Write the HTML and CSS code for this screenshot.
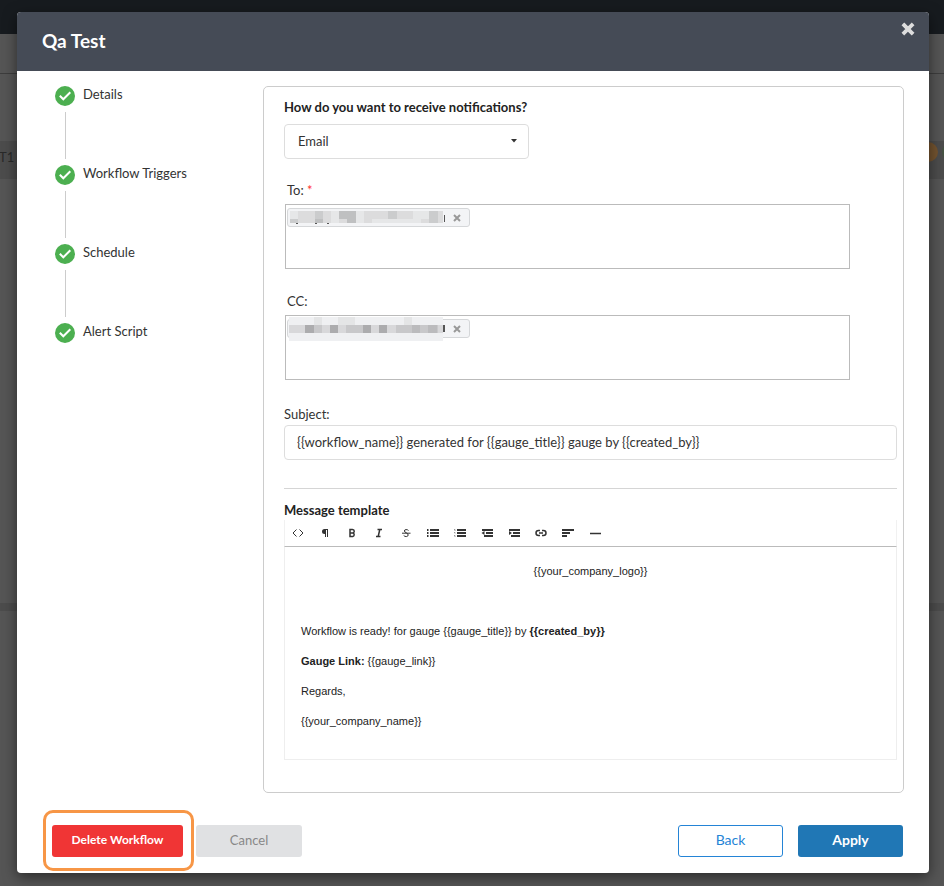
FILE: index.html
```html
<!DOCTYPE html>
<html lang="en">
<head>
<meta charset="utf-8">
<meta name="viewport" content="width=device-width, initial-scale=1">
<title>Qa Test</title>
<link rel="stylesheet" href="styles.css">
</head>
<body>
<div class="page">
  <div class="page-nav"></div>
  <div class="page-bar"></div>
  <div class="page-gap"></div>
  <div class="page-row"><span class="page-name">ST1</span><span class="page-dots"><i class="dot dot-orange"></i><i class="dot dot-green"></i></span></div>
  <div class="page-list"></div>
  <div class="page-strip"></div>
</div>
<div class="overlay">
  <section class="modal" role="dialog" aria-labelledby="title">
    <header class="modal-header">
      <h1 id="title">Qa Test</h1>
      <button class="close" type="button" aria-label="Close"><svg width="14" height="14" viewBox="0 0 14 14"><path d="M3.200 3.200L10.800 10.800M10.800 3.200L3.200 10.800" stroke="currentColor" stroke-width="3.800" stroke-linecap="square"/></svg></button>
    </header>
    <div class="modal-body">
      <ol class="steps">
        <li class="step"><svg class="check" viewBox="0 0 20 20"><circle cx="10" cy="10" r="10"/><path d="M4.800 9.800L8.300 13.300L15.300 6.300"/></svg><span>Details</span></li>
        <li class="step"><svg class="check" viewBox="0 0 20 20"><circle cx="10" cy="10" r="10"/><path d="M4.800 9.800L8.300 13.300L15.300 6.300"/></svg><span>Workflow Triggers</span></li>
        <li class="step"><svg class="check" viewBox="0 0 20 20"><circle cx="10" cy="10" r="10"/><path d="M4.800 9.800L8.300 13.300L15.300 6.300"/></svg><span>Schedule</span></li>
        <li class="step"><svg class="check" viewBox="0 0 20 20"><circle cx="10" cy="10" r="10"/><path d="M4.800 9.800L8.300 13.300L15.300 6.300"/></svg><span>Alert Script</span></li>
      </ol>
      <form class="panel">
        <label class="heading" for="channel">How do you want to receive notifications?</label>
        <div class="select-wrap">
          <select id="channel"><option>Email</option></select>
          <svg class="caret" width="8" height="4" viewBox="0 0 8 4"><path d="M1 0H7L4 3.500Z" fill="#333"/></svg>
        </div>
        <div class="recipients">
          <span class="label" id="to-label">To: <span class="required">*</span></span>
          <div class="tag-box" role="group" aria-labelledby="to-label">
            <span class="tag">
              <svg class="mosaic" width="160" height="24" viewBox="0 0 160 24" shape-rendering="crispEdges">
                <path d="M8 17h2v1h-2zM27 17h2v1h-2zM39 17h2v1h-2zM156 9h1v7h-1z" fill="#555"/>
                <g transform="translate(2 5) scale(8.200 4)">
                  <path d="M0 0h18.700v3h-18.700z" fill="#dcdcdd"/>
                  <path d="M0 0h1v2h-1zM5 0h1v3h-1zM8 0h1v3h-1zM15 0h2v2h-2zM10 2h6v1h-6z" fill="#e6e7e8"/>
                  <path d="M3 0h1v2h-1zM12 0h1v2h-1zM17 0h1v3h-1zM0 2h1v1h-1z" fill="#cbcccd"/>
                  <path d="M6 0h1v2h-1zM7 0h1v3h-1zM3 2h1v1h-1z" fill="#bfc0c1"/>
                </g>
              </svg>
              <button type="button" class="remove" aria-label="Remove"><svg width="8" height="8" viewBox="0 0 8 8"><path d="M1 1L7 7M7 1L1 7" stroke="#999" stroke-width="2"/></svg></button>
            </span>
          </div>
        </div>
        <div class="recipients">
          <span class="label" id="cc-label">CC:</span>
          <div class="tag-box" role="group" aria-labelledby="cc-label">
            <span class="tag">
              <svg class="mosaic" width="160" height="24" viewBox="0 0 160 24" shape-rendering="crispEdges">
                <path d="M155 8h2v7h-2z" fill="#555"/>
                <g transform="translate(1 0) scale(8.200 8)">
                  <path d="M0 0h18.800v3h-18.800z" fill="#eff0f2"/>
                  <path d="M3 0h1v1h-1zM6 0h2v1h-2zM14 0h1v1h-1z" fill="#e4e5e6"/>
                  <path d="M0 1h18.800v1h-18.800z" fill="#c8c8ca"/>
                  <path d="M0 1h2v1h-2zM4 1h1v1h-1zM6 1h1v1h-1zM10 1h1v1h-1zM12 1h1v1h-1zM18.200 1h.6v1h-.6z" fill="#d8d8da"/>
                  <path d="M2 1h1v1h-1zM5 1h1v1h-1zM9 1h1v1h-1zM11 1h1v1h-1z" fill="#acacae"/>
                  <path d="M15 1h1v1h-1zM17 1h1v1h-1z" fill="#bbbbbd"/>
                </g>
              </svg>
              <button type="button" class="remove" aria-label="Remove"><svg width="8" height="8" viewBox="0 0 8 8"><path d="M1 1L7 7M7 1L1 7" stroke="#999" stroke-width="2"/></svg></button>
            </span>
          </div>
        </div>
        <label class="label subject-label" for="subject">Subject:</label>
        <input id="subject" class="subject" type="text" value="{{workflow_name}} generated for {{gauge_title}} gauge by {{created_by}}">
        <hr>
        <h2 class="heading">Message template</h2>
        <div class="toolbar" role="toolbar" aria-label="Formatting">
          <button type="button" aria-label="HTML"><svg viewBox="0 0 14 14"><path d="M5.500 3.500L2 7L5.500 10.500M8.500 3.500L12 7L8.500 10.500" class="thin"/></svg></button>
          <button type="button" aria-label="Paragraph"><svg viewBox="0 0 14 14"><path d="M10 3H6.500A2.500 2.500 0 0 0 6.500 8H7V11H8V4H9V11H10Z" class="fill"/></svg></button>
          <button type="button" aria-label="Bold"><svg viewBox="0 0 14 14"><path d="M5 3.500H7.500A1.700 1.700 0 0 1 7.500 7H5ZM5 7H7.800A1.800 1.800 0 0 1 7.800 10.500H5Z" class="medium"/></svg></button>
          <button type="button" aria-label="Italic"><svg viewBox="0 0 14 14"><path d="M5.500 3.500H10M4 10.500H8.500M7.800 3.500L6.200 10.500" class="medium"/></svg></button>
          <button type="button" aria-label="Strikethrough"><svg viewBox="0 0 14 14"><path d="M9.500 4.500C8.500 3.200 5.300 3.200 5.300 5C5.300 6.500 9.200 6.800 9.200 9C9.200 11 5.800 11 4.700 9.500M3 7.200H11.500" class="thin"/></svg></button>
          <button type="button" aria-label="Bulleted list"><svg viewBox="0 0 14 14"><path d="M1 4H2.500M1 7H2.500M1 10H2.500M4 4H13M4 7H13M4 10H13" class="bar"/></svg></button>
          <button type="button" aria-label="Numbered list"><svg viewBox="0 0 14 14"><path d="M4 4H13M4 7H13M4 10H13" class="bar"/><path d="M1 3.500H2V5M1 6.500H2V7.500M1 9.500H2V11" class="faint"/></svg></button>
          <button type="button" aria-label="Outdent"><svg viewBox="0 0 14 14"><path d="M2 4H13M6 7H13M4 10H13" class="bar"/><path d="M1.500 7L4.500 5V9Z" class="fill"/></svg></button>
          <button type="button" aria-label="Indent"><svg viewBox="0 0 14 14"><path d="M2 4H13M6 7H13M4 10H13" class="bar"/><path d="M2 5L5 7L2 9Z" class="fill"/></svg></button>
          <button type="button" aria-label="Link"><svg viewBox="0 0 14 14"><path d="M6 9.500H4.500A2.500 2.500 0 0 1 4.500 4.500H6M8 4.500H9.500A2.500 2.500 0 0 1 9.500 9.500H8M5 7H9" class="medium"/></svg></button>
          <button type="button" aria-label="Align"><svg viewBox="0 0 14 14"><path d="M1 4H13M1 7H9M1 10H6" class="bar"/></svg></button>
          <button type="button" aria-label="Horizontal rule"><svg viewBox="0 0 14 14"><path d="M2 7.500H13" class="medium"/></svg></button>
        </div>
        <div class="editor" contenteditable="true" role="textbox" aria-label="Message template">
          <p class="center">{{your_company_logo}}</p>
          <p><br></p>
          <p>Workflow is ready! for gauge {{gauge_title}} by <b>{{created_by}}</b></p>
          <p><b>Gauge Link:</b> {{gauge_link}}</p>
          <p>Regards,</p>
          <p>{{your_company_name}}</p>
        </div>
      </form>
    </div>
    <footer class="modal-footer">
      <div class="highlight"><button type="button" class="btn delete">Delete Workflow</button></div>
      <button type="button" class="btn cancel">Cancel</button>
      <span class="spacer"></span>
      <button type="button" class="btn back">Back</button>
      <button type="button" class="btn apply">Apply</button>
    </footer>
  </section>
</div>
</body>
</html>
```

FILE: styles.css
```css
* { box-sizing: border-box; }
body { margin: 0; min-height: 100vh; background: #555; color: #333; font: 13px/20px "Lato", "Liberation Sans", sans-serif; }
button, input, select { font: inherit; color: inherit; }
button { cursor: pointer; }
.page { position: absolute; inset: 0; display: flex; flex-direction: column; overflow: hidden; }
.page-nav { height: 34px; background: #171b1f; }
.page-bar { height: 40px; border-bottom: 1px solid #3d3d3d; }
.page-gap { height: 67px; }
.page-row { height: 38px; padding-top: 1px; background: #4c4c4c; display: flex; align-items: flex-start; justify-content: space-between; color: #292929; }
.page-name { margin: 5px 0 0 -8px; }
.page-dots { display: flex; gap: 4px; margin-right: -18px; }
.dot { width: 20px; height: 20px; border-radius: 50%; }
.dot-orange { background: #73532f; }
.dot-green { background: #465343; }
.page-list { height: 424px; }
.page-strip { height: 8px; background: #4c4c4c; }
.overlay { position: relative; padding: 12px 15px 13px 17px; }
.modal { background: #fff; border-radius: 4px; box-shadow: 0 4px 14px rgba(0,0,0,.5); overflow: hidden; }
.modal-header { height: 59px; background: #454b56; display: flex; justify-content: space-between; align-items: flex-start; padding: 10px 14px 0 25px; }
h1 { margin: 8px 0 0; color: #fff; font-size: 19px; line-height: 22px; font-weight: 700; }
.close { border: 0; background: none; padding: 0; color: #ddd; height: 14px; display: flex; }
.modal-body { display: flex; padding: 15px 25px 0 38px; }
.steps { list-style: none; margin: 0; padding: 0; width: 208px; flex: none; }
.step { position: relative; height: 79px; display: flex; gap: 8px; line-height: 16px; }
.step:not(:last-child)::after { content: ""; position: absolute; left: 10px; top: 26px; height: 47px; border-left: 1px solid #ccc; }
.check { width: 20px; height: 20px; flex: none; }
.check circle { fill: #4caf50; }
.check path { fill: none; stroke: #fff; stroke-width: 2; }
.panel { flex: 1; min-width: 0; border: 1px solid #ccc; border-radius: 5px; padding: 10px 6px 32px 20px; }
.heading { display: block; margin: 0; font-size: 13px; line-height: 20px; font-weight: 700; color: #222; }
.select-wrap { position: relative; width: 245px; margin: 7px 0 21px; }
select { appearance: none; display: block; width: 100%; height: 35px; border: 1px solid #ddd; border-radius: 4px; background: #fff; padding: 0 13px 2px; }
.caret { position: absolute; right: 11px; top: 15px; pointer-events: none; }
.recipients { margin: 0 47px 22px 1px; }
.label { display: block; line-height: 20px; }
.recipients .label { margin: 0 0 4px 2px; }
.required { color: #f33; }
.tag-box { height: 65px; border: 1px solid #bbb; padding: 3px 1px; }
.tag { display: flex; align-items: center; width: 183px; height: 19px; border: 1px solid #d5d7d9; border-radius: 3px; background: #f3f4f6; }
.mosaic { flex: none; }
.remove { border: 0; background: none; padding: 0 0 0 5px; display: flex; }
.subject-label { margin-top: 24px; }
.subject { display: block; width: 100%; height: 35px; margin-top: 1px; border: 1px solid #ddd; border-radius: 4px; padding: 0 12px 2px; }
hr { border: 0; border-top: 1px solid #d5d5d5; margin: 28px 0 11px; }
.toolbar { height: 27px; display: flex; border-right: 1px solid #f1f1f1; border-left: 1px solid #f1f1f1; border-bottom: 1px solid #bbb; }
.toolbar button { width: 27px; border: 0; background: none; padding: 0 2px 0 0; display: grid; place-items: center; }
.toolbar svg { width: 14px; height: 14px; }
.toolbar path { fill: none; stroke: #333; }
.toolbar .thin { stroke-width: 1; }
.toolbar .medium { stroke-width: 1.500; }
.toolbar .bar { stroke-width: 2; }
.toolbar .faint { stroke: #999; }
.toolbar .fill { fill: #333; stroke: none; }
.editor { border: 1px solid #eee; border-top: 0; padding: 14px 16px 18px; font: 11px/20px "Liberation Sans", Arial, sans-serif; color: #222; }
.editor p { margin: 0 0 10px; }
.center { text-align: center; }
.modal-footer { display: flex; align-items: center; padding: 17px 26px 2px; }
.highlight { border: 3px solid #f79646; border-radius: 10px; padding: 12px 8px 11px 6px; }
.btn { display: block; height: 32px; width: 105px; border: 0; border-radius: 3px; padding: 0 0 2px; }
.delete { width: 131px; background: #f03535; color: #fff; font-size: 12px; font-weight: 700; }
.cancel { width: 106px; margin-left: 2px; background: #e0e1e3; color: #888; }
.spacer { flex: 1; }
.back { border: 1px solid #2484d6; background: #fff; color: #2484d6; margin-right: 15px; font-size: 14px; }
.apply { background: #2077b5; color: #fff; font-size: 14px; font-weight: 700; }
```
